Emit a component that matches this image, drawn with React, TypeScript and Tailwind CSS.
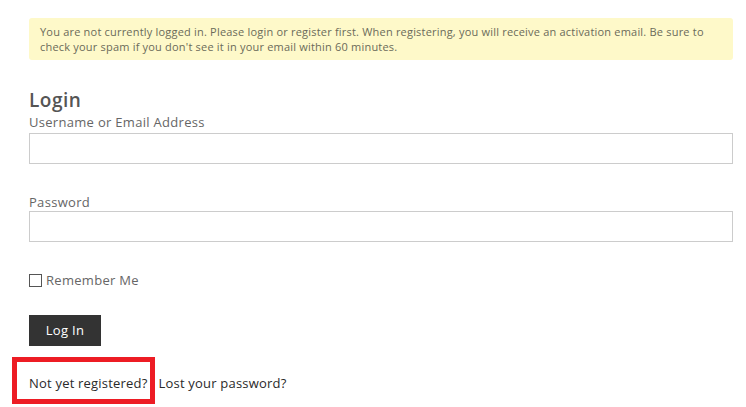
export default function App() {
  const font = { fontFamily: '"Open Sans", "Liberation Sans", sans-serif' };
  return (
    <div className="w-[746px] h-[407px] bg-white overflow-hidden" style={font}>
      <div className="pl-[29px] pr-[13px] pt-[18px]">
        <div className="bg-[#fef9c9] rounded-[3px] px-[11px] py-[6px] text-[11px] leading-[15px] tracking-[0.2px] text-[#6b6b5a]">
          You are not currently logged in. Please login or register first. When registering, you will receive an activation email. Be sure to check your spam if you don't see it in your email within 60 minutes.
        </div>
        <h2 className="mt-[28px] text-[19px] leading-[24px] font-semibold tracking-[0.5px] text-[#555]">Login</h2>
        <label className="block mt-[1px] text-[13px] leading-[18px] tracking-[0.3px] text-[#666]">Username or Email Address</label>
        <div className="mt-[2px] h-[31px] border border-[#ccc] bg-white" />
        <label className="block mt-[29px] text-[13px] leading-[18px] tracking-[0.3px] text-[#666]">Password</label>
        <div className="mt-[0px] h-[31px] border border-[#ccc] bg-white" />
        <div className="mt-[29px] flex items-center gap-[4px]">
          <span className="w-[13px] h-[13px] border border-[#555] bg-white" />
          <span className="text-[13px] leading-[18px] tracking-[0.3px] text-[#666]">Remember Me</span>
        </div>
        <button className="mt-[26px] w-[72px] h-[31px] bg-[#333] text-white text-[13px] tracking-[0.3px]">Log In</button>
        <div className="relative mt-[28px] flex gap-[11px] text-[13px] leading-[18px] tracking-[0.2px] text-[#2a2a2a]">
          <span className="relative">
            Not yet registered?
            <span className="absolute left-[-17px] right-[-7px] top-[-17px] h-[47px] border-[5px] border-[#ed1c24]" />
          </span>
          <span>Lost your password?</span>
        </div>
      </div>
    </div>
  );
}
